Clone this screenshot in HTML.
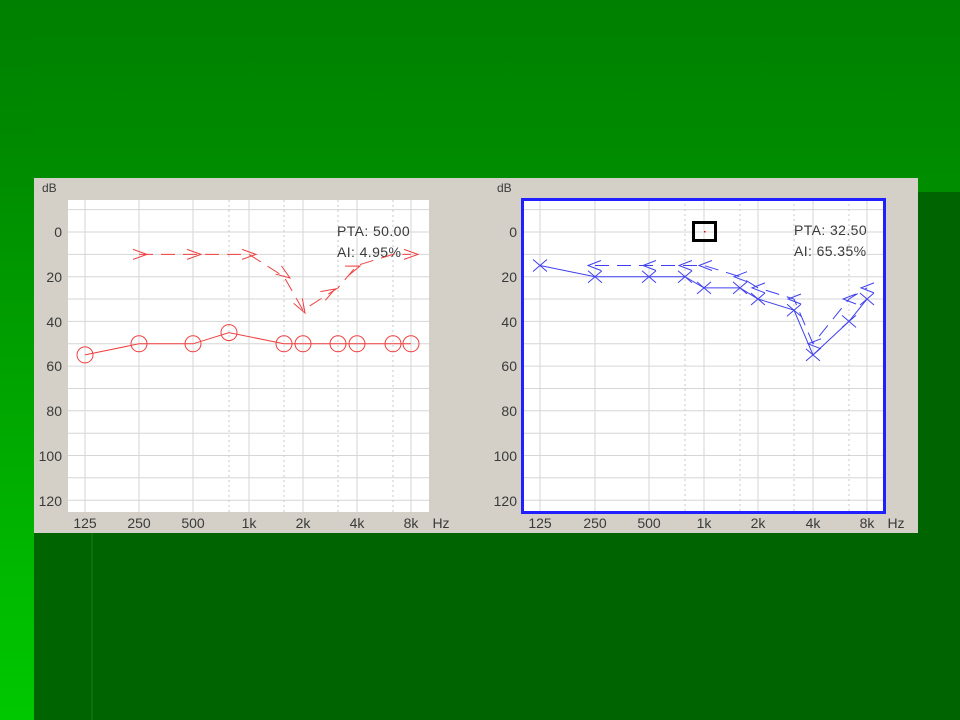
<!DOCTYPE html>
<html><head><meta charset="utf-8"><style>
html,body{margin:0;padding:0;width:960px;height:720px;overflow:hidden}
svg{display:block}
text{font-family:"Liberation Sans",sans-serif;font-size:14px;fill:#3a3a3a}
.info{font-size:14px;letter-spacing:0.4px}
</style></head><body>
<svg width="960" height="720" viewBox="0 0 960 720" xmlns="http://www.w3.org/2000/svg">
<defs>
<linearGradient id="top" x1="0" y1="0" x2="0" y2="1"><stop offset="0" stop-color="#008000"/><stop offset="1" stop-color="#008e00"/></linearGradient>
<linearGradient id="left" x1="0" y1="0" x2="0" y2="1"><stop offset="0" stop-color="#008000"/><stop offset="0.2" stop-color="#008a00"/><stop offset="1" stop-color="#00c800"/></linearGradient>
<g id="gl">
<g stroke="#d6d6d6" stroke-width="1">
<line x1="0" x2="1000" y1="209.6" y2="209.6"/><line x1="0" x2="1000" y1="232" y2="232"/><line x1="0" x2="1000" y1="254.4" y2="254.4"/><line x1="0" x2="1000" y1="276.7" y2="276.7"/><line x1="0" x2="1000" y1="299" y2="299"/><line x1="0" x2="1000" y1="321.4" y2="321.4"/><line x1="0" x2="1000" y1="343.8" y2="343.8"/><line x1="0" x2="1000" y1="366.1" y2="366.1"/><line x1="0" x2="1000" y1="388.5" y2="388.5"/><line x1="0" x2="1000" y1="410.8" y2="410.8"/><line x1="0" x2="1000" y1="433.2" y2="433.2"/><line x1="0" x2="1000" y1="455.5" y2="455.5"/><line x1="0" x2="1000" y1="477.8" y2="477.8"/><line x1="0" x2="1000" y1="500.2" y2="500.2"/>
</g></g>
<path id="cir" d="M-8,0a8,8 0 1,0 16,0a8,8 0 1,0 -16,0" fill="none" stroke="#f04040"/>
<path id="gt" d="M-14,-5L0,0L-14,5" fill="none" stroke="#f04040"/>
<path id="xx" d="M-7,-6L7,6M-7,6L7,-6" fill="none" stroke="#4040f0"/>
<path id="lt" d="M13,-5L0,0L13,5" fill="none" stroke="#4040f0"/>
</defs>
<rect width="960" height="720" fill="#006400"/>
<rect width="960" height="192" fill="url(#top)"/>
<rect width="34" height="720" fill="url(#left)"/>
<line x1="92" y1="533" x2="92" y2="720" stroke="#1a7a1a" stroke-width="1"/>
<rect x="34" y="178" width="884" height="355" fill="#d4d0c8"/>

<!-- left chart -->
<svg x="68" y="200" width="361" height="312" viewBox="68 200 361 312" overflow="hidden">
<rect x="68" y="200" width="361" height="312" fill="#fff"/>
<use href="#gl"/>
<g stroke="#d6d6d6"><line x1="85" x2="85" y1="200" y2="512"/><line x1="139" x2="139" y1="200" y2="512"/><line x1="193" x2="193" y1="200" y2="512"/><line x1="249" x2="249" y1="200" y2="512"/><line x1="303" x2="303" y1="200" y2="512"/><line x1="357" x2="357" y1="200" y2="512"/><line x1="411" x2="411" y1="200" y2="512"/></g>
<g stroke="#c8c8c8" stroke-dasharray="2,3"><line x1="229" x2="229" y1="200" y2="512"/><line x1="284" x2="284" y1="200" y2="512"/><line x1="338" x2="338" y1="200" y2="512"/><line x1="393" x2="393" y1="200" y2="512"/></g>
<text class="info" x="337" y="236">PTA: 50.00</text>
<text class="info" x="337" y="257">AI: 4.95%</text>
<polyline points="85,354.9 139,343.8 193,343.8 229,332.6 284,343.8 303,343.8 338,343.8 357,343.8 393,343.8 411,343.8" fill="none" stroke="#f04040"/>
<polyline points="139,254.4 193,254.4 249,254.4 284,276.7 303,310.2 338,287.9 357,265.5 393,254.4 411,254.4" fill="none" stroke="#f04040" stroke-dasharray="14,8"/>
<use href="#cir" x="85" y="354.9"/><use href="#cir" x="139" y="343.8"/><use href="#cir" x="193" y="343.8"/><use href="#cir" x="229" y="332.6"/><use href="#cir" x="284" y="343.8"/><use href="#cir" x="303" y="343.8"/><use href="#cir" x="338" y="343.8"/><use href="#cir" x="357" y="343.8"/><use href="#cir" x="393" y="343.8"/><use href="#cir" x="411" y="343.8"/>
<use href="#gt" x="147" y="254.4"/><use href="#gt" x="201" y="254.4"/><use href="#gt" x="256" y="254.4"/><use href="#gt" transform="translate(290,278) rotate(35)"/><use href="#gt" transform="translate(305,313) rotate(60)"/><use href="#gt" transform="translate(335,289) rotate(-30)"/><use href="#gt" transform="translate(360,266) rotate(-20)"/><use href="#gt" x="418" y="254.4"/>
</svg>
<text x="42" y="192" style="font-size:12px">dB</text>
<g text-anchor="end"><text x="62" y="237">0</text><text x="62" y="282">20</text><text x="62" y="327">40</text><text x="62" y="371">60</text><text x="62" y="416">80</text><text x="62" y="461">100</text><text x="62" y="506">120</text></g>
<g text-anchor="middle"><text x="85" y="528">125</text><text x="139" y="528">250</text><text x="193" y="528">500</text><text x="249" y="528">1k</text><text x="303" y="528">2k</text><text x="357" y="528">4k</text><text x="411" y="528">8k</text><text x="441" y="528">Hz</text></g>

<!-- right chart -->
<svg x="522" y="199" width="363" height="314" viewBox="522 199 363 314" overflow="hidden">
<rect x="522" y="199" width="363" height="314" fill="#fff"/>
<use href="#gl"/>
<g stroke="#d6d6d6"><line x1="540" x2="540" y1="199" y2="513"/><line x1="595" x2="595" y1="199" y2="513"/><line x1="649" x2="649" y1="199" y2="513"/><line x1="704" x2="704" y1="199" y2="513"/><line x1="758" x2="758" y1="199" y2="513"/><line x1="813" x2="813" y1="199" y2="513"/><line x1="867" x2="867" y1="199" y2="513"/></g>
<g stroke="#c8c8c8" stroke-dasharray="2,3"><line x1="685" x2="685" y1="199" y2="513"/><line x1="740" x2="740" y1="199" y2="513"/><line x1="794" x2="794" y1="199" y2="513"/><line x1="849" x2="849" y1="199" y2="513"/></g>
<text class="info" x="794" y="235">PTA: 32.50</text>
<text class="info" x="794" y="256">AI: 65.35%</text>
<rect x="693.5" y="222.5" width="22" height="18" fill="none" stroke="#000" stroke-width="3"/>
<rect x="704" y="231" width="1.5" height="1.5" fill="#e00"/>
<polyline points="540,265.5 595,276.7 649,276.7 685,276.7 704,287.9 740,287.9 758,299 794,310.2 813,354.9 849,321.4 867,299" fill="none" stroke="#4040f0"/>
<polyline points="595,265.5 649,265.5 685,265.5 704,265.5 740,276.7 758,287.9 794,299 813,343.8 849,299 867,287.9" fill="none" stroke="#4040f0" stroke-dasharray="14,8"/>
<use href="#xx" x="540" y="265.5"/><use href="#xx" x="595" y="276.7"/><use href="#xx" x="649" y="276.7"/><use href="#xx" x="685" y="276.7"/><use href="#xx" x="704" y="287.9"/><use href="#xx" x="740" y="287.9"/><use href="#xx" x="758" y="299"/><use href="#xx" x="794" y="310.2"/><use href="#xx" x="813" y="354.9"/><use href="#xx" x="849" y="321.4"/><use href="#xx" x="867" y="299"/>
<use href="#lt" x="588" y="265.5"/><use href="#lt" x="643" y="265.5"/><use href="#lt" x="679" y="265.5"/><use href="#lt" x="699" y="265.5"/><use href="#lt" x="734" y="276.7"/><use href="#lt" x="752" y="287.9"/><use href="#lt" x="788" y="299"/><use href="#lt" x="808" y="343.8"/><use href="#lt" x="843" y="299"/><use href="#lt" x="861" y="287.9"/>
</svg>
<rect x="522.5" y="199.5" width="362" height="313" fill="none" stroke="#2020ff" stroke-width="3"/>
<text x="497" y="192" style="font-size:12px">dB</text>
<g text-anchor="end"><text x="517" y="237">0</text><text x="517" y="282">20</text><text x="517" y="327">40</text><text x="517" y="371">60</text><text x="517" y="416">80</text><text x="517" y="461">100</text><text x="517" y="506">120</text></g>
<g text-anchor="middle"><text x="540" y="528">125</text><text x="595" y="528">250</text><text x="649" y="528">500</text><text x="704" y="528">1k</text><text x="758" y="528">2k</text><text x="813" y="528">4k</text><text x="867" y="528">8k</text><text x="896" y="528">Hz</text></g>
</svg>
</body></html>
